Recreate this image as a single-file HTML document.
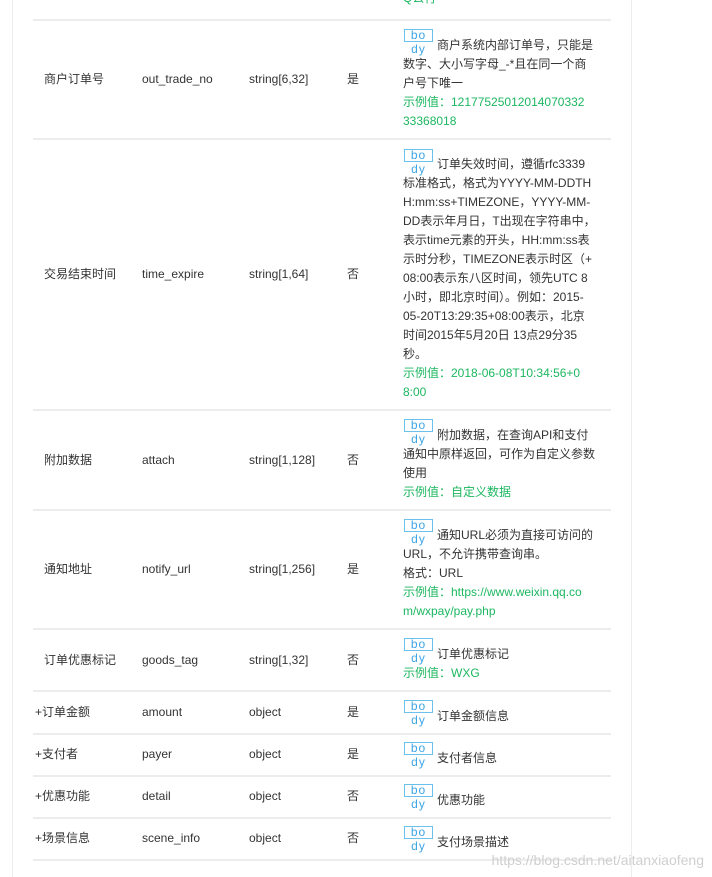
<!DOCTYPE html>
<html><head><meta charset="utf-8"><style>
*{margin:0;padding:0;box-sizing:border-box}
body{width:712px;height:877px;background:#fff;position:relative;overflow:hidden;font-family:"Liberation Sans","Noto Sans CJK SC",sans-serif;font-size:12px;color:#333}
.vl{position:absolute;top:0;width:1px;height:877px;background:#ececec}
.hl{position:absolute;left:33px;width:578px;height:2px;background:#ececec}
.c{position:absolute;line-height:19px;white-space:nowrap}
.tag{position:absolute;width:29px;height:13px;border:1px solid #6cc0ee;color:#3ea5e6;font-size:12px;line-height:11px;text-align:center;letter-spacing:1px}
.tag i{font-style:normal;position:absolute;left:0;width:27px;top:13px;line-height:12px}
.g{color:#1cb760}
.d{position:absolute;left:403px;line-height:19px;white-space:nowrap}
.w{position:absolute;right:8px;bottom:9px;color:#cfcfcf;font-size:14px;font-family:"Liberation Sans",sans-serif}
</style></head><body>
<div class="vl" style="left:12px"></div>
<div class="vl" style="left:631px"></div>
<div class="c g" style="left:403px;top:-11px">Q公行</div>

<div class="hl" style="top:19px"></div>
<div class="c" style="left:44px;top:70px">商户订单号</div>
<div class="c" style="left:142px;top:70px">out_trade_no</div>
<div class="c" style="left:249px;top:70px">string[6,32]</div>
<div class="c" style="left:347px;top:70px">是</div>
<div class="tag" style="left:404px;top:29px">bo<i>dy</i></div>
<div class="d" style="top:36px"><span style="padding-left:34px">商户系统内部订单号，只能是</span><br>数字、大小写字母_-*且在同一个商<br>户号下唯一<br><span class="g">示例值：12177525012014070332<br>33368018</span></div>

<div class="hl" style="top:138px"></div>
<div class="c" style="left:44px;top:265px">交易结束时间</div>
<div class="c" style="left:142px;top:265px">time_expire</div>
<div class="c" style="left:249px;top:265px">string[1,64]</div>
<div class="c" style="left:347px;top:265px">否</div>
<div class="tag" style="left:404px;top:149px">bo<i>dy</i></div>
<div class="d" style="top:155px"><span style="padding-left:34px">订单失效时间，遵循rfc3339</span><br>标准格式，格式为YYYY-MM-DDTH<br>H:mm:ss+TIMEZONE，YYYY-MM-<br>DD表示年月日，T出现在字符串中，<br>表示time元素的开头，HH:mm:ss表<br>示时分秒，TIMEZONE表示时区（+<br>08:00表示东八区时间，领先UTC 8<br>小时，即北京时间）。例如：2015-<br>05-20T13:29:35+08:00表示，北京<br>时间2015年5月20日 13点29分35<br>秒。<br><span class="g">示例值：2018-06-08T10:34:56+0<br>8:00</span></div>

<div class="hl" style="top:409px"></div>
<div class="c" style="left:44px;top:451px">附加数据</div>
<div class="c" style="left:142px;top:451px">attach</div>
<div class="c" style="left:249px;top:451px">string[1,128]</div>
<div class="c" style="left:347px;top:451px">否</div>
<div class="tag" style="left:404px;top:419px">bo<i>dy</i></div>
<div class="d" style="top:426px"><span style="padding-left:34px">附加数据，在查询API和支付</span><br>通知中原样返回，可作为自定义参数<br>使用<br><span class="g">示例值：自定义数据</span></div>

<div class="hl" style="top:509px"></div>
<div class="c" style="left:44px;top:560px">通知地址</div>
<div class="c" style="left:142px;top:560px">notify_url</div>
<div class="c" style="left:249px;top:560px">string[1,256]</div>
<div class="c" style="left:347px;top:560px">是</div>
<div class="tag" style="left:404px;top:519px">bo<i>dy</i></div>
<div class="d" style="top:526px"><span style="padding-left:34px">通知URL必须为直接可访问的</span><br>URL，不允许携带查询串。<br>格式：URL<br><span class="g">示例值：https://www.weixin.qq.co<br>m/wxpay/pay.php</span></div>

<div class="hl" style="top:628px"></div>
<div class="c" style="left:44px;top:651px">订单优惠标记</div>
<div class="c" style="left:142px;top:651px">goods_tag</div>
<div class="c" style="left:249px;top:651px">string[1,32]</div>
<div class="c" style="left:347px;top:651px">否</div>
<div class="tag" style="left:404px;top:638px">bo<i>dy</i></div>
<div class="d" style="top:645px"><span style="padding-left:34px">订单优惠标记</span><br><span class="g">示例值：WXG</span></div>

<div class="hl" style="top:690px"></div>
<div class="c" style="left:35px;top:703px">+订单金额</div>
<div class="c" style="left:142px;top:703px">amount</div>
<div class="c" style="left:249px;top:703px">object</div>
<div class="c" style="left:347px;top:703px">是</div>
<div class="tag" style="left:404px;top:700px">bo<i>dy</i></div>
<div class="d" style="top:707px"><span style="padding-left:34px">订单金额信息</span></div>

<div class="hl" style="top:733px"></div>
<div class="c" style="left:35px;top:745px">+支付者</div>
<div class="c" style="left:142px;top:745px">payer</div>
<div class="c" style="left:249px;top:745px">object</div>
<div class="c" style="left:347px;top:745px">是</div>
<div class="tag" style="left:404px;top:742px">bo<i>dy</i></div>
<div class="d" style="top:749px"><span style="padding-left:34px">支付者信息</span></div>

<div class="hl" style="top:775px"></div>
<div class="c" style="left:35px;top:787px">+优惠功能</div>
<div class="c" style="left:142px;top:787px">detail</div>
<div class="c" style="left:249px;top:787px">object</div>
<div class="c" style="left:347px;top:787px">否</div>
<div class="tag" style="left:404px;top:784px">bo<i>dy</i></div>
<div class="d" style="top:791px"><span style="padding-left:34px">优惠功能</span></div>

<div class="hl" style="top:817px"></div>
<div class="c" style="left:35px;top:829px">+场景信息</div>
<div class="c" style="left:142px;top:829px">scene_info</div>
<div class="c" style="left:249px;top:829px">object</div>
<div class="c" style="left:347px;top:829px">否</div>
<div class="tag" style="left:404px;top:826px">bo<i>dy</i></div>
<div class="d" style="top:833px"><span style="padding-left:34px">支付场景描述</span></div>

<div class="hl" style="top:859px"></div>
<div class="w">https://blog.csdn.net/aitanxiaofeng</div>
</body></html>
